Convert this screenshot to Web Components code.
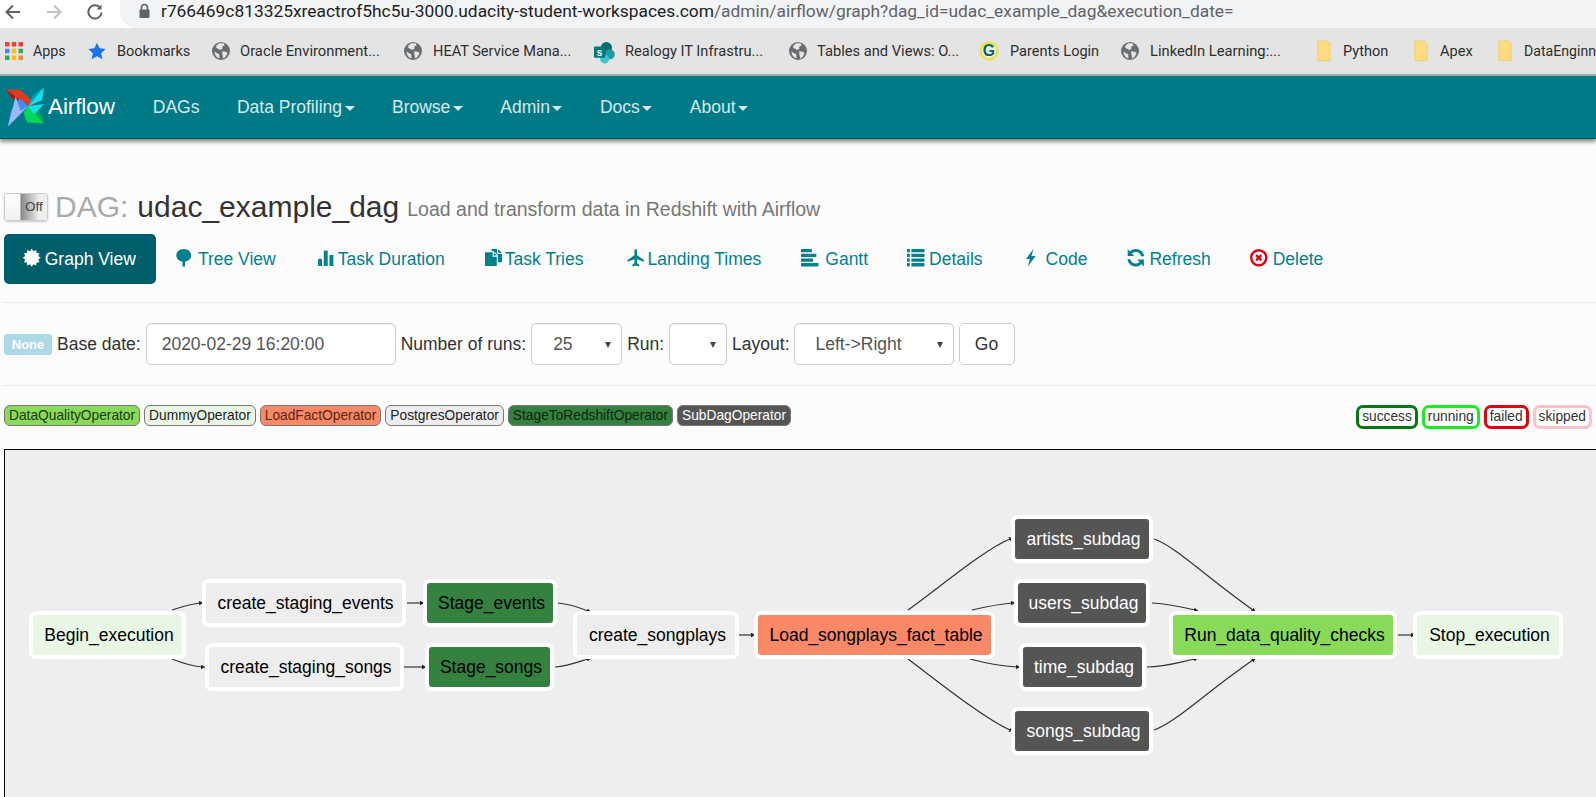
<!DOCTYPE html>
<html>
<head>
<meta charset="utf-8">
<title>Airflow - DAG</title>
<style>
  html, body { margin: 0; height: 797px; overflow: hidden; background: #fcfcfc; }
  body { display: flex; flex-direction: column; font-family: "Liberation Sans", Arial, sans-serif; font-size: 17.5px; color: #333; }
</style>
</head>
<body>
  <chrome-toolbar url-host="r766469c813325xreactrof5hc5u-3000.udacity-student-workspaces.com" url-path="/admin/airflow/graph?dag_id=udac_example_dag&amp;execution_date="></chrome-toolbar>
  <bookmark-bar>
    <bookmark-item icon="apps" gap="10" w="33" after="21.5">Apps</bookmark-item>
    <bookmark-item icon="star" gap="11.5" w="73" after="22">Bookmarks</bookmark-item>
    <bookmark-item icon="globe" gap="10" w="140" after="24">Oracle Environment...</bookmark-item>
    <bookmark-item icon="globe" gap="11" w="138" after="23">HEAT Service Mana...</bookmark-item>
    <bookmark-item icon="sharepoint" gap="13" w="138" after="26">Realogy IT Infrastru...</bookmark-item>
    <bookmark-item icon="globe" gap="10" w="142" after="21">Tables and Views: O...</bookmark-item>
    <bookmark-item icon="gee" gap="12" w="89" after="22">Parents Login</bookmark-item>
    <bookmark-item icon="globe" gap="11" w="131" after="34">LinkedIn Learning:...</bookmark-item>
    <bookmark-item icon="folder" gap="10" w="45" after="24">Python</bookmark-item>
    <bookmark-item icon="folder" gap="10" w="33" after="23">Apex</bookmark-item>
    <bookmark-item icon="folder" gap="10" w="72" after="0">DataEnginn</bookmark-item>
  </bookmark-bar>
  <air-navbar>
    <nav-item>DAGs</nav-item>
    <nav-item caret>Data Profiling</nav-item>
    <nav-item caret>Browse</nav-item>
    <nav-item caret>Admin</nav-item>
    <nav-item caret>Docs</nav-item>
    <nav-item caret>About</nav-item>
  </air-navbar>
  <dag-title name="udac_example_dag" description="Load and transform data in Redshift with Airflow"></dag-title>
  <dag-tabs>
    <tab-link icon="burst" gap="4.5" active>Graph View</tab-link>
    <tab-link icon="tree" gap="5.5" nudge="-2">Tree View</tab-link>
    <tab-link icon="bars" gap="3.5" nudge="1">Task Duration</tab-link>
    <tab-link icon="docs" gap="2.5">Task Tries</tab-link>
    <tab-link icon="plane" gap="2.5" nudge="4">Landing Times</tab-link>
    <tab-link icon="gantt" gap="6.5">Gantt</tab-link>
    <tab-link icon="list" gap="4.5" nudge="-1">Details</tab-link>
    <tab-link icon="flash" gap="6.5" nudge="-1">Code</tab-link>
    <tab-link icon="refresh" gap="4.5">Refresh</tab-link>
    <tab-link icon="remove" gap="5.5" nudge="-1">Delete</tab-link>
  </dag-tabs>
  <dag-form></dag-form>
  <dag-legend>
    <op-chip slot="ops" bg="#89da59" fg="#1c3a10">DataQualityOperator</op-chip>
    <op-chip slot="ops" bg="#e8f7e4" fg="#222">DummyOperator</op-chip>
    <op-chip slot="ops" bg="#f98866" fg="#5c2413">LoadFactOperator</op-chip>
    <op-chip slot="ops" bg="#ededed" fg="#222">PostgresOperator</op-chip>
    <op-chip slot="ops" bg="#358140" fg="#0c2410">StageToRedshiftOperator</op-chip>
    <op-chip slot="ops" bg="#555555" fg="#fff">SubDagOperator</op-chip>
    <state-chip slot="states" color="#007a0c">success</state-chip>
    <state-chip slot="states" color="#14f01e">running</state-chip>
    <state-chip slot="states" color="#e00010">failed</state-chip>
    <state-chip slot="states" color="#ffc0cb">skipped</state-chip>
  </dag-legend>
  <dag-graph>
    <dag-node x="29" y="610" w="157" bg="#e8f7e4">Begin_execution</dag-node>
    <dag-node x="202" y="578" w="204" bg="#ededed">create_staging_events</dag-node>
    <dag-node x="205" y="642" w="199" bg="#ededed">create_staging_songs</dag-node>
    <dag-node x="423" y="578" w="134" bg="#358140">Stage_events</dag-node>
    <dag-node x="425" y="642" w="129" bg="#358140">Stage_songs</dag-node>
    <dag-node x="573" y="610" w="166" bg="#ededed">create_songplays</dag-node>
    <dag-node x="754" y="610" w="241" bg="#f98866">Load_songplays_fact_table</dag-node>
    <dag-node x="1011" y="514" w="142" bg="#555" fg="#fff">artists_subdag</dag-node>
    <dag-node x="1014" y="578" w="136" bg="#555" fg="#fff">users_subdag</dag-node>
    <dag-node x="1019" y="642" w="127" bg="#555" fg="#fff">time_subdag</dag-node>
    <dag-node x="1011" y="706" w="142" bg="#555" fg="#fff">songs_subdag</dag-node>
    <dag-node x="1169" y="610" w="228" bg="#89da59">Run_data_quality_checks</dag-node>
    <dag-node x="1413" y="610" w="150" bg="#e8f7e4">Stop_execution</dag-node>
  </dag-graph>

<script>
const ICONS = {
  tree: '<path d="M8 0C4 0 1.2 2.6 1.2 6c0 3 2.6 5.2 5.6 5.5V16h2.4v-4.5c3-.3 5.6-2.5 5.6-5.5C14.8 2.6 12 0 8 0z"/>',
  bars: '<rect x="1" y="9" width="3.6" height="6.5"/><rect x="6.2" y="1.5" width="3.6" height="14"/><rect x="11.4" y="5.5" width="3.6" height="10"/>',
  docs: '<path d="M0 3h7v4h3.8v8.5H0z"/><path d="M8 3.2 10.8 6H8z"/><path d="M6 0h5v4.5h4.6V12h-3.8V5.6L8 2H6z"/><path d="M12 .2 15.6 3.5H12z"/>',
  plane: '<path d="M8 0c.8 0 1.2 1.1 1.2 2.2v3.4L15.5 10v1.6L9.2 9.4v3.4l1.9 1.5V16L8 15.1 4.9 16v-1.7l1.9-1.5V9.4L.5 11.6V10l6.3-4.4V2.2C6.8 1.1 7.2 0 8 0z"/>',
  gantt: '<rect x="0" y="0" width="10" height="3" rx=".5"/><rect x="0" y="4.3" width="14" height="3" rx=".5"/><rect x="0" y="8.6" width="11" height="3" rx=".5"/><rect x="0" y="12.9" width="16" height="3" rx=".5"/>',
  list: '<rect x="0" y="0" width="2.6" height="3"/><rect x="4" y="0" width="12" height="3" rx=".5"/><rect x="0" y="4.3" width="2.6" height="3"/><rect x="4" y="4.3" width="12" height="3" rx=".5"/><rect x="0" y="8.6" width="2.6" height="3"/><rect x="4" y="8.6" width="12" height="3" rx=".5"/><rect x="0" y="12.9" width="2.6" height="3"/><rect x="4" y="12.9" width="12" height="3" rx=".5"/>',
  flash: '<path d="M10.5 0 3.6 9.2h3.6L5.4 16l7-9.6H8.6z"/>',
  refresh: '<path d="M14.4 6.6A6.6 6.6 0 0 0 3 3.6" fill="none" stroke="currentColor" stroke-width="2.6"/><path d="M.6 0 6.6 6.4H.6z"/><path d="M1.6 9.4A6.6 6.6 0 0 0 13 12.4" fill="none" stroke="currentColor" stroke-width="2.6"/><path d="M15.4 16 9.4 9.6h6z"/>',
  remove: '<circle cx="8" cy="8" r="6.9" fill="none" stroke="#e00010" stroke-width="2.2"/><path d="M5.6 5.6l4.8 4.8M10.4 5.6l-4.8 4.8" fill="none" stroke="#e00010" stroke-width="2.2"/>',
  apps: '<g><rect x="0" y="0" width="4" height="4" fill="#ea4335"/><rect x="6" y="0" width="4" height="4" fill="#ea4335"/><rect x="12" y="0" width="4" height="4" fill="#ea4335"/><rect x="0" y="6" width="4" height="4" fill="#4285f4"/><rect x="6" y="6" width="4" height="4" fill="#fbbc05"/><rect x="12" y="6" width="4" height="4" fill="#34a853"/><rect x="0" y="12" width="4" height="4" fill="#34a853"/><rect x="6" y="12" width="4" height="4" fill="#fbbc05"/><rect x="12" y="12" width="4" height="4" fill="#ea8a35"/></g>',
  star: '<path fill="#1a73e8" d="M8 .6l2.3 5 5.4.6-4 3.7 1.1 5.4L8 12.6l-4.8 2.7 1.1-5.4-4-3.7 5.4-.6z"/>',
  globe: '<circle cx="8" cy="8" r="8" fill="#6a6e73"/><path fill="#e4e4e4" d="M6.5 1.2 9.8 1c1 .6 1.6 1.4 1.3 2.2L9 4.2l.4 1.6-2 1.3-1.9-1.2L3.6 5 4 3.2zM9 8.2l3.6.4 1.2 1.6-1.8 3.2-2 1.2-.8-3.4zM2.2 8.4l2.6 1.8 1.6.4.2 3.8C4 14 2.4 11.4 2.2 8.4z"/>',
  sharepoint: '<circle cx="11" cy="5" r="5" fill="#036c70"/><circle cx="14" cy="11" r="4.4" fill="#1a9ba1"/><circle cx="9.5" cy="15" r="4" fill="#37c6d0"/><rect x="0" y="4" width="10" height="10" rx="1" fill="#03787c"/><text x="5" y="12" font-size="9" font-weight="700" fill="#fff" text-anchor="middle" font-family="Liberation Sans">s</text>',
  gee: '<circle cx="8" cy="8" r="8.6" fill="#e9e34a"/><circle cx="8" cy="8" r="6.4" fill="#e8f0ea"/><text x="8" y="12.8" font-size="14" font-weight="700" fill="#12605e" text-anchor="middle" font-family="Liberation Sans">G</text>',
  folder: '<path fill="#fddc7f" stroke="#eac866" stroke-width=".6" d="M2.5 -1h8.5l2.5 2V16.5H2.5z"/>'
};

function burst() {
  let pts = [];
  for (let i = 0; i < 24; i++) {
    let r = i % 2 ? 6.2 : 8.2;
    let a = i * Math.PI / 12;
    pts.push((8 + r * Math.cos(a)).toFixed(2) + "," + (8 + r * Math.sin(a)).toFixed(2));
  }
  return '<polygon points="' + pts.join(" ") + '"/>';
}
ICONS.burst = burst();

class UiIcon extends HTMLElement {
  constructor() {
    super();
    this.attachShadow({ mode: 'open' });
  }
  connectedCallback() {
    const size = this.getAttribute("size") || "17.5";
    this.shadowRoot.innerHTML = `
      <style>
        :host { display: inline-flex; flex: none; width: ${size}px; height: ${size}px; }
        svg { width: 100%; height: 100%; fill: currentColor; overflow: visible; }
      </style>
      <svg viewBox="0 0 16 16">${ICONS[this.getAttribute("name")] || ""}</svg>`;
  }
}

class ChromeToolbar extends HTMLElement {
  constructor() {
    super();
    this.attachShadow({ mode: 'open' });
  }
  connectedCallback() {
    this.shadowRoot.innerHTML = `
      <style>
        :host { display: flex; align-items: flex-start; height: 28px; background: #fff; flex: none; }
        .nav { display: flex; width: 120px; height: 24px; align-items: center; padding-left: 3px; box-sizing: border-box; gap: 21px; }
        .nav svg { width: 20px; height: 20px; fill: none; stroke: #5f6368; stroke-width: 2; flex: none; }
        .nav svg.off { stroke: #bdc1c6; }
        .pill { flex: 1; height: 28px; background: #f1f3f4; border-radius: 0 0 0 16px; display: flex; align-items: center; padding: 0 0 6px 18px; box-sizing: border-box; }
        .lock { width: 13px; height: 16px; margin-right: 10px; flex: none; }
        .url { font: 17.35px Roboto, sans-serif; color: #5f6368; white-space: nowrap; }
        .url b { font-weight: 400; color: #202124; }
      </style>
      <div class="nav">
        <svg viewBox="0 0 20 20"><path d="M17 10H4M10 3.5 3.5 10l6.5 6.5"/></svg>
        <svg class="off" viewBox="0 0 20 20"><path d="M3 10h13M10 3.5l6.5 6.5-6.5 6.5"/></svg>
        <svg viewBox="0 0 20 20"><path d="M16.5 10.5a6.6 6.6 0 1 1-1.7-5"/><path d="M16.5 2.5v5h-5" fill="#5f6368" stroke="none"/></svg>
      </div>
      <div class="pill">
        <svg class="lock" viewBox="0 0 13 16"><path fill="none" stroke="#5f6368" stroke-width="1.6" d="M3.5 7V4.5a3 3 0 0 1 6 0V7"/><rect x="1.5" y="6.5" width="10" height="8.5" rx="1" fill="#5f6368"/></svg>
        <span class="url"><b>${this.getAttribute("url-host")}</b>${this.getAttribute("url-path").replace("&", "&amp;")}</span>
      </div>`;
  }
}

class BookmarkBar extends HTMLElement {
  constructor() {
    super();
    this.attachShadow({ mode: 'open' });
  }
  connectedCallback() {
    this.shadowRoot.innerHTML = `
      <style>
        :host { display: flex; align-items: center; flex: none; height: 46px; box-sizing: content-box; background: #e4e4e4; border-bottom: 2px solid #a9acad; padding-left: 5px; overflow: hidden; white-space: nowrap; }
      </style>
      <slot></slot>`;
  }
}

class BookmarkItem extends HTMLElement {
  constructor() {
    super();
    this.attachShadow({ mode: 'open' });
  }
  connectedCallback() {
    const icon = this.getAttribute("icon");
    this.shadowRoot.innerHTML = `
      <style>
        :host { display: inline-flex; align-items: center; flex: none; gap: ${this.getAttribute("gap")}px; margin-right: ${this.getAttribute("after")}px; font: 15.5px Roboto, sans-serif; color: #2e2e2e; }
        ui-icon { color: #666; }
        .box { display: block; width: ${this.getAttribute("w")}px; white-space: nowrap; }
        .label { display: inline-block; transform-origin: 0 50%; }
      </style>
      <ui-icon name="${icon}" size="18"></ui-icon><span class="box"><span class="label"><slot></slot></span></span>`;
    // the bookmark labels of the screenshot are squeezed, no narrow font here
    const label = this.shadowRoot.querySelector(".label");
    label.style.transform = `scaleX(${this.getAttribute("w") / label.offsetWidth})`;
  }
}

class AirNavbar extends HTMLElement {
  constructor() {
    super();
    this.attachShadow({ mode: 'open' });
  }
  connectedCallback() {
    this.shadowRoot.innerHTML = `
      <style>
        :host { display: flex; align-items: center; flex: none; height: 63px; background: #007a87; border-bottom: 1px solid #00505a; box-sizing: border-box; box-shadow: 0 3px 4px rgba(0,0,0,.45); position: relative; }
        .brand { display: flex; align-items: center; padding-left: 5px; width: 134px; box-sizing: border-box; flex: none; font-size: 22.5px; color: #fff; gap: 4px; letter-spacing: -.1px; }
        .logo { width: 39px; height: 42px; flex: none; }
      </style>
      <div class="brand">
        <svg class="logo" viewBox="5 87 40 42">
          <polygon fill="#e43921" points="6,90 20,90 37,105 29,107"/>
          <polygon fill="#a71d0c" points="6,90 29,107 22,104 12,99"/>
          <polygon fill="#11e1ee" points="45,88 43,101 29,107 34,97"/>
          <polygon fill="#00a8c4" points="45,88 29,107 33,98 38,93"/>
          <polygon fill="#04d659" points="45,125 28,124 24,114 29,107"/>
          <polygon fill="#00ad46" points="46,126 29,107 38,110 43,118"/>
          <polygon fill="#3f8ef5" points="8,128 11,112 20,99 29,107"/>
          <polygon fill="#9db8f7" points="8,128 29,107 21,112 16,97"/>
          <polygon fill="#11e1ee" points="29,107 45,105 35,116"/>
        </svg>
        <span>Airflow</span>
      </div>
      <slot></slot>`;
  }
}

class NavItem extends HTMLElement {
  constructor() {
    super();
    this.attachShadow({ mode: 'open' });
  }
  connectedCallback() {
    this.shadowRoot.innerHTML = `
      <style>
        :host { display: flex; align-items: center; padding: 0 18.75px; color: #d7e8ea; font-size: 17.5px; }
        .caret { width: 0; height: 0; margin-left: 2.5px; margin-top: 2px; border: 5px solid transparent; border-bottom: 0; border-top-color: currentColor; }
      </style>
      <slot></slot>${this.hasAttribute("caret") ? '<i class="caret"></i>' : ''}`;
  }
}

class DagTitle extends HTMLElement {
  constructor() {
    super();
    this.attachShadow({ mode: 'open' });
  }
  connectedCallback() {
    this.shadowRoot.innerHTML = `
      <style>
        :host { display: flex; align-items: center; flex: none; height: 36px; margin-top: 50px; padding-left: 4px; white-space: nowrap; }
        .toggle { display: flex; width: 44px; height: 28px; box-sizing: border-box; border: 1px solid #ccc; border-radius: 3px; margin-right: 7px; overflow: hidden; box-shadow: 0 1px 2px rgba(0,0,0,.2); flex: none; }
        .handle { width: 15px; background: linear-gradient(#fff, #f0f0f0); border-right: 1px solid #bbb; }
        .off { flex: 1; background: linear-gradient(90deg, #8a8a8a, #efefef 70%); font-size: 13.5px; line-height: 26px; color: #444; text-align: center; }
        .dag { font-size: 30px; color: #aaa; margin-right: 9px; }
        .name { font-size: 30px; color: #333; margin-right: 8px; }
        .desc { font-size: 19.5px; color: #777; margin-top: 4px; }
      </style>
      <div class="toggle"><div class="handle"></div><div class="off">Off</div></div>
      <span class="dag">DAG:</span><span class="name">${this.getAttribute("name")}</span><span class="desc">${this.getAttribute("description")}</span>`;
  }
}

class DagTabs extends HTMLElement {
  constructor() {
    super();
    this.attachShadow({ mode: 'open' });
  }
  connectedCallback() {
    this.shadowRoot.innerHTML = `
      <style>
        :host { display: flex; flex: none; gap: 2.5px; margin: 9px 0 0 4px; padding-bottom: 18px; border-bottom: 1px solid #eaeaea; }
      </style>
      <slot></slot>`;
  }
}

class TabLink extends HTMLElement {
  constructor() {
    super();
    this.attachShadow({ mode: 'open' });
  }
  connectedCallback() {
    const active = this.hasAttribute("active");
    const icon = this.getAttribute("icon");
    const gap = this.getAttribute("gap") || "3.5";
    const nudge = this.getAttribute("nudge") || "0";
    this.shadowRoot.innerHTML = `
      <style>
        :host { display: flex; align-items: center; height: 50px; box-sizing: border-box; padding: 0 ${active ? '19.75px' : '18.75px'} 0 18.75px; margin-left: ${nudge}px; border-radius: 5px; font-size: 17.5px; white-space: nowrap; color: ${active ? '#fff' : '#00818f'}; background: ${active ? '#005f6b' : 'transparent'}; }
        ui-icon { margin-right: ${gap}px; margin-top: -3px; }
      </style>
      <ui-icon name="${icon}"></ui-icon><span><slot></slot></span>`;
  }
}

class DagForm extends HTMLElement {
  constructor() {
    super();
    this.attachShadow({ mode: 'open' });
  }
  connectedCallback() {
    this.shadowRoot.innerHTML = `
      <style>
        :host { display: flex; align-items: center; flex: none; margin-left: 4px; padding-bottom: 20px; box-sizing: content-box; height: 42px; margin-top: 20px; border-bottom: 1px solid #eaeaea; white-space: nowrap; }
        .none { background: #add8e6; color: #fff; font-weight: 700; font-size: 13px; width: 48px; height: 21px; line-height: 21px; text-align: center; border-radius: 3px; margin-right: 5px; }
        .field { height: 42px; box-sizing: border-box; background: #fff; border: 1px solid #ccc; border-radius: 5px; display: flex; align-items: center; color: #555; box-shadow: inset 0 1px 1px rgba(0,0,0,.07); }
        .date { width: 250px; margin: 0 5px 0 5px; padding-left: 15px; }
        .select { position: relative; padding-left: 21px; margin: 0 5px; box-sizing: border-box; }
        .select::after { content: ""; position: absolute; right: 10px; top: 18px; border: 3.5px solid transparent; border-bottom: 0; border-top: 6px solid #444; }
        .go { width: 56px; justify-content: center; color: #333; box-shadow: none; }
      </style>
      <span class="none">None</span>
      <span>Base date:</span>
      <div class="field date">2020-02-29 16:20:00</div>
      <span>Number of runs:</span>
      <div class="field select" style="width:91px">25</div>
      <span>Run:</span>
      <div class="field select" style="width:58px"></div>
      <span>Layout:</span>
      <div class="field select" style="width:160px;margin-left:4px">Left-&gt;Right</div>
      <div class="field go">Go</div>`;
  }
}

class DagLegend extends HTMLElement {
  constructor() {
    super();
    this.attachShadow({ mode: 'open' });
  }
  connectedCallback() {
    this.shadowRoot.innerHTML = `
      <style>
        :host { display: flex; justify-content: space-between; align-items: flex-start; flex: none; padding: 19px 4px 0; box-sizing: content-box; height: 25px; margin-bottom: 19px; }
        div { display: flex; gap: 4px; }
      </style>
      <div><slot name="ops"></slot></div>
      <div><slot name="states"></slot></div>`;
  }
}

class OpChip extends HTMLElement {
  constructor() {
    super();
    this.attachShadow({ mode: 'open' });
  }
  connectedCallback() {
    this.shadowRoot.innerHTML = `
      <style>
        :host { display: block; box-sizing: border-box; height: 21px; line-height: 19px; padding: 0 4px; font-size: 13.75px; border: 1px solid #777; border-radius: 6px; background: ${this.getAttribute("bg")}; color: ${this.getAttribute("fg")}; white-space: nowrap; }
      </style>
      <slot></slot>`;
  }
}

class StateChip extends HTMLElement {
  constructor() {
    super();
    this.attachShadow({ mode: 'open' });
  }
  connectedCallback() {
    this.shadowRoot.innerHTML = `
      <style>
        :host { display: block; box-sizing: border-box; height: 24px; line-height: 18px; padding: 0 3px; font-size: 13.75px; border: 3px solid ${this.getAttribute("color")}; border-radius: 7px; background: #fff; color: #333; white-space: nowrap; }
      </style>
      <slot></slot>`;
  }
}

// edges of the graph, in page coordinates like the nodes
const EDGES = [
  "M172 609C182 606 190 603 200 602", "M172 658C182 662 192 665 202 666",
  "M407 602H421", "M404 666H423",
  "M558 602C570 603 578 606 588 610", "M555 666C568 665 578 661 588 658",
  "M739 634H752",
  "M908 609C940 586 985 548 1010 538", "M972 609C985 606 1000 603 1012 602",
  "M970 658C985 662 1000 665 1017 666", "M908 658C940 682 985 718 1010 729",
  "M1154 538C1175 545 1205 575 1253 609", "M1152 602C1168 603 1182 606 1195 609",
  "M1147 666C1165 666 1180 661 1195 658", "M1154 729C1175 722 1205 692 1253 659",
  "M1398 634H1412"
];

class DagGraph extends HTMLElement {
  constructor() {
    super();
    this.attachShadow({ mode: 'open' });
  }
  connectedCallback() {
    const lines = EDGES.map(d => `<path d="${d}" marker-end="url(#head)"/>`).join("");
    this.shadowRoot.innerHTML = `
      <style>
        :host { display: block; flex: 1; position: relative; margin-left: 4px; border-top: 1px solid #000; border-left: 1px solid #000; background: #eeeeee; overflow: hidden; }
        svg { position: absolute; left: -5px; top: -449px; width: 1596px; height: 1247px; }
        path { fill: none; stroke: #333; stroke-width: 1.2; }
        marker path { fill: #222; stroke: none; }
      </style>
      <svg viewBox="0 0 1596 1247">
        <defs><marker id="head" markerWidth="5" markerHeight="6" refX="1" refY="3" orient="auto" markerUnits="userSpaceOnUse"><path d="M0 .8 4.5 3 0 5.2z"/></marker></defs>
        ${lines}
      </svg>
      <slot></slot>`;
  }
}

class DagNode extends HTMLElement {
  constructor() {
    super();
    this.attachShadow({ mode: 'open' });
  }
  connectedCallback() {
    const x = this.getAttribute("x") - 5;
    const y = this.getAttribute("y") - 449;
    this.shadowRoot.innerHTML = `
      <style>
        :host { position: absolute; left: ${x}px; top: ${y}px; width: ${this.getAttribute("w")}px; height: 48px; box-sizing: border-box; display: flex; align-items: center; justify-content: center; padding: 1px 0 0 3px; border: 4px solid #fff; border-radius: 7px; background: ${this.getAttribute("bg")}; color: ${this.getAttribute("fg") || '#000'}; font-size: 17.5px; white-space: nowrap; }
      </style>
      <slot></slot>`;
  }
}

customElements.define("ui-icon", UiIcon);
customElements.define("chrome-toolbar", ChromeToolbar);
customElements.define("bookmark-bar", BookmarkBar);
customElements.define("bookmark-item", BookmarkItem);
customElements.define("air-navbar", AirNavbar);
customElements.define("nav-item", NavItem);
customElements.define("dag-title", DagTitle);
customElements.define("dag-tabs", DagTabs);
customElements.define("tab-link", TabLink);
customElements.define("dag-form", DagForm);
customElements.define("dag-legend", DagLegend);
customElements.define("op-chip", OpChip);
customElements.define("state-chip", StateChip);
customElements.define("dag-graph", DagGraph);
customElements.define("dag-node", DagNode);
</script>
</body>
</html>
